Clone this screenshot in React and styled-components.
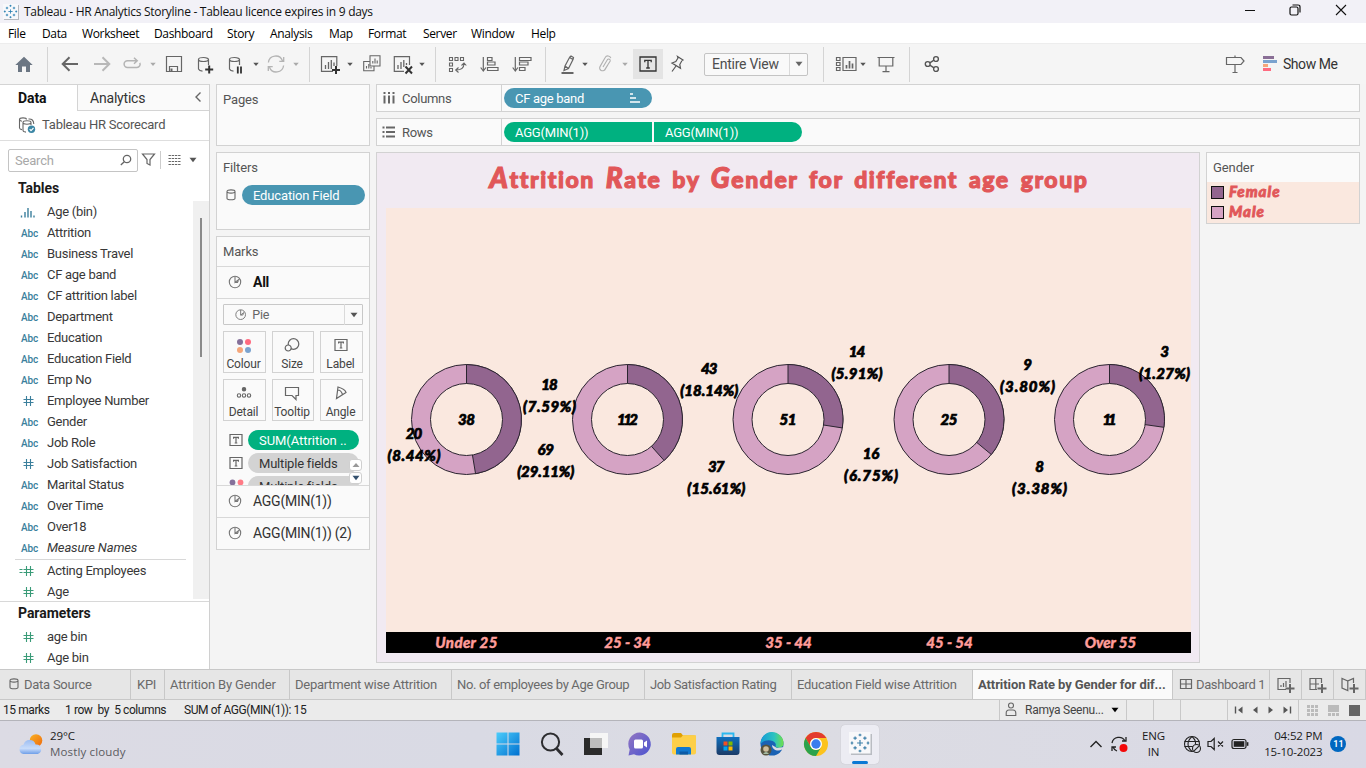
import React from "react";
import styled, { createGlobalStyle, css } from "styled-components";

const ui = `Roboto, "Liberation Sans", sans-serif`;
const sys = `"Open Sans", "Noto Sans", sans-serif`;
const display = `Lato, "Liberation Sans", sans-serif`;
const PEACH = "#fae8df";

const Global = createGlobalStyle`
  * { box-sizing: border-box; }
  body { margin: 0; background: #f4f4f4; overflow: hidden; }
  svg { display: block; overflow: visible; flex: none; }
`;

const Window = styled.div`
  width: 1366px; height: 768px; display: flex; flex-direction: column;
  font: 13px ${ui}; color: #333; background: #f4f4f4; white-space: nowrap; overflow: hidden;
`;

/* ---------- generic ---------- */
const Glyph = ({ w = 20, h = 20, c = "#666", s = 1.2, fill = "none", children, className }) => (
  <svg className={className} width={w} height={h} viewBox={`${-w / 2} ${-h / 2} ${w} ${h}`} fill={fill} stroke={c} strokeWidth={s}>
    {children}
  </svg>
);
const Caret = ({ c = "#555" }) => (
  <svg width="8" height="20" viewBox="-4 -10 8 20"><path d="M-2.7 -1.3H2.7L0 2Z" fill={c} /></svg>
);
const Down = ({ c = "#555" }) => (
  <svg width="8" height="6" viewBox="0 0 8 6"><path d="M.5 .8h7L4 5.2z" fill={c} /></svg>
);

/* ---------- title + menu ---------- */
const TitleBar = styled.div`
  height: 23px; flex: none; display: flex; align-items: center; background: #f2f1f7;
  font: 12px ${sys}; letter-spacing: -0.28px; color: #111; padding-left: 3px;
`;
const TitleText = styled.span`margin-left: 5px; flex: 1;`;
const WinButtons = styled.div`
  display: flex; gap: 25px; margin-right: 15px; margin-top: -3px;
`;
const MenuBar = styled.div`
  height: 20px; flex: none; background: #fff; display: flex; align-items: center; padding: 2px 0 0 8px;
  font: 12px/20px ${sys}; color: #000;
`;
const MenuItem = styled.span`width: ${p => p.$w}px; letter-spacing: -0.35px;`;
const menu = [["File", 34], ["Data", 40], ["Worksheet", 72], ["Dashboard", 73], ["Story", 43], ["Analysis", 59], ["Map", 39], ["Format", 55], ["Server", 48], ["Window", 60], ["Help", 40]];

/* ---------- toolbar ---------- */
const Toolbar = styled.div`
  height: 41px; flex: none; display: flex; align-items: center; background: #f5f5f5; border-top: 1px solid #ededed;
  > * { flex: none; }
`;
const Tool = styled.span`display: flex; align-items: center; margin-left: ${p => p.$gap}px;`;
const Divider = styled.span`width: 1px; height: 35px; background: #d4d4d4; margin-left: ${p => p.$gap}px; margin-top: 1px;`;
const ActiveTool = styled.span`
  width: 30px; height: 30px; margin-left: 4px; background: #e4e4e4; display: flex; align-items: center; justify-content: center;
`;
const FitSelect = styled.div`
  width: 104px; height: 23px; margin-left: 17px; border: 1px solid #c4c4c4; border-radius: 2px; background: #f9f9f9;
  display: flex; align-items: center; font-size: 14px; color: #4e4e4e; padding-left: 7px; letter-spacing: -0.25px;
`;
const SelectArrow = styled.span`
  margin-left: auto; width: 18px; height: 21px; border-left: 1px solid #dadada; display: flex; align-items: center; justify-content: center;
`;
const ShowMe = styled.span`
  display: flex; align-items: center; gap: 6px; margin-left: 18px; font-size: 14px; color: #333; letter-spacing: -0.45px;
`;

const Cylinder = () => <path d="M-7.5 -4.5a5 2 0 0 1 10 0a5 2 0 0 1 -10 0V5q.8 2 4 2.2M2.5 -4.5V1" />;
const SortBars = ({ desc }) => (
  <>
    <path d="M-6.7 -7V6" />
    <path d="M-9.3 3.5L-6.7 7L-4.1 3.5" />
    {desc
      ? <path d="M-2.5 -6.5H9V-3.5H-2.5ZM-2.5 -2H6V1H-2.5ZM-2.5 3.5H3V6.5H-2.5Z" />
      : <path d="M-2.5 -6.5H2V-3.5H-2.5ZM-2.5 -2H5V1H-2.5ZM-2.5 3.5H8V6.5H-2.5Z" />}
  </>
);

function TopToolbar() {
  return (
    <Toolbar>
      <Tool $gap={14}><Glyph c="none" fill="#6b7683"><path d="M0 -7.2L8.7 1H6V8H2V2.5H-2V8H-6V1H-8.7Z" /></Glyph></Tool>
      <Divider $gap={13} />
      <Tool $gap={12}><Glyph s={2}><path d="M8 0H-7M-.5 -6.8L-7.3 0L-.5 6.8" /></Glyph></Tool>
      <Tool $gap={12}><Glyph s={2} c="#b8b8b8"><path d="M-8 0H7M.5 -6.8L7.3 0L.5 6.8" /></Glyph></Tool>
      <Tool $gap={10}><Glyph s={1.5} c="#b4b4b4"><path d="M5 -3.3H-4.5a3.4 3.4 0 0 0 0 6.8H5a3.2 3.2 0 0 0 2.8-4.6M2 -6.3L5.2 -3.3L2 -.3" /></Glyph></Tool>
      <Tool $gap={7}><Caret c="#aaa" /></Tool>
      <Tool $gap={7}><Glyph><path d="M-7.5 -7.5H7.5V7.5H-7.5ZM-4.5 7.5V2.5H3.5V7.5" /><path d="M-2.5 4.5V7" strokeWidth="2" /></Glyph></Tool>
      <Tool $gap={12}><Glyph><Cylinder /><path d="M3.2 1.5V9.5M-.8 5.5H7.2" stroke="#333" strokeWidth="2" /></Glyph></Tool>
      <Tool $gap={11}><Glyph><Cylinder /><path d="M.8 2.5V9.5M4 2.5V9.5" stroke="#333" strokeWidth="1.8" /></Glyph></Tool>
      <Tool $gap={5}><Caret /></Tool>
      <Tool $gap={6}><Glyph c="#b4b4b4" s={1.3}><path d="M-7.6 -1.5A7.3 7.3 0 0 1 6.5 -3.2M7.6 1.5A7.3 7.3 0 0 1 -6.5 3.2M7.7 -7V-2.6H3.3M-7.7 7V2.6H-3.3" /></Glyph></Tool>
      <Tool $gap={6}><Caret c="#aaa" /></Tool>
      <Divider $gap={9} />
      <Tool $gap={10}><Glyph><path d="M3 7.3H-8.5V-7.3H6.8V2" /><path d="M-4.5 5V1M-1.5 5V-2M1.3 5V-4M4 2V-1.5" strokeWidth="1.3" /><path d="M6 2V10M2 6H10" stroke="#333" strokeWidth="2" /></Glyph></Tool>
      <Tool $gap={6}><Caret /></Tool>
      <Tool $gap={8}><Glyph s={1.1}><path d="M-2 -8.3H8V2H-2ZM-2 -2.5H-8.3V6.8H2V2" /><path d="M.8 -.5V-3M3 -.5V-5.5M5.2 -.5V-3.5M-5.5 4.5V2M-3.2 4.5V0M-1 4.5V3" /></Glyph></Tool>
      <Tool $gap={11}><Glyph><path d="M1 7.3H-8.7V-7.3H6.5V1" /><path d="M-5 5V1M-2 5V-2M.8 3V-4M3.5 1V-1" strokeWidth="1.3" /><path d="M2.5 2.5L9 9.5M9 2.5L2.5 9.5" stroke="#333" strokeWidth="2" /></Glyph></Tool>
      <Tool $gap={5}><Caret /></Tool>
      <Divider $gap={9} />
      <Tool $gap={11}><Glyph s={1.1}><path d="M-7.5 -6.5h3v3h-3zM-2 -6.5h3v3h-3zM3.5 -6.5h3v3h-3zM-7.5 -1h3v3h-3zM-7.5 4.5h3v3h-3zM7 -.5Q7 6 -1 6M1.5 3.5L-1.3 6L1.5 8.5M4.5 1.5L7 -1L9.3 1.5" /></Glyph></Tool>
      <Tool $gap={13}><Glyph s={1.2}><SortBars /></Glyph></Tool>
      <Tool $gap={12}><Glyph s={1.2}><SortBars desc /></Glyph></Tool>
      <Divider $gap={13} />
      <Tool $gap={12}><Glyph><path d="M1.5 -6.5L3 -8L5.5 -6.5L5 -4.5L.5 4.5L-4 6.5L-3 2L1.5 -6.5L5 -4.5M-3 2L.5 4.5" /><path d="M-6.5 9H5.5" strokeWidth="2" /></Glyph></Tool>
      <Tool $gap={3}><Caret /></Tool>
      <Tool $gap={6}><Glyph c="#b0b0b0" s={1.1}><path d="M-2 3L2.5 -4.5a1.6 1.6 0 0 1 2.7 1.5L0 5.3a2.8 2.8 0 0 1 -5 -2.7L.2 -6.4a3 3 0 0 1 5.6 .6M2.8 1L-.5 6.5" /></Glyph></Tool>
      <Tool $gap={6}><Caret c="#aaa" /></Tool>
      <ActiveTool><Glyph c="#333" s={1.3}><path d="M-8 -7H8V7H-8ZM-3.2 -1.7V-3.6H3.2V-1.7M0 -3.6V4M-1.8 4H1.8" /></Glyph></ActiveTool>
      <Tool $gap={4}><Glyph c="#555"><path d="M.5 -7.5L6 -4L4.8 -3.2L2.8 .5L3.5 4.3L-5 -1L-1.2 -2.5L1 -6ZM-1 2L-5 7.5" /></Glyph></Tool>
      <FitSelect>Entire View<SelectArrow><Down c="#666" /></SelectArrow></FitSelect>
      <Divider $gap={15} />
      <Tool $gap={12}><Glyph s={1.2}><path d="M-3 -6.5H10V6.5H-3ZM-9.5 -6.5h3.5v3h-3.5zM-9.5 -1.5h3.5v3h-3.5zM-9.5 3.5h3.5v3h-3.5z" /><path d="M.5 4.5V1M3.5 4.5V-3M6.5 4.5V-.5" strokeWidth="1.7" /></Glyph></Tool>
      <Tool $gap={3}><Caret /></Tool>
      <Tool $gap={9}><Glyph s={1.2}><path d="M-8.5 -6.5H8.5M-6.8 -6.5V2H6.8V-6.5M0 2V7.5M-3.5 7.7H3.5" /></Glyph></Tool>
      <Divider $gap={13} />
      <Tool $gap={12}><Glyph c="#555" s={1.4}><circle cx="-4.3" cy="0" r="2.4" /><circle cx="4" cy="-5" r="2.4" /><circle cx="4" cy="5" r="2.4" /><path d="M-2.2 -1.2L2 -3.8M-2.2 1.2L2 3.8" /></Glyph></Tool>
      <Tool $gap={283}><Glyph s={1.2}><path d="M-8.5 -6.5H6L9 -3L6 .5H-8.5ZM0 -8.5V-6.5M0 .5V8.5M-2.5 8.5H2.5" /></Glyph></Tool>
      <ShowMe>
        <svg width="14" height="16" viewBox="0 0 14 16"><path d="M0 0h11v3H0z" fill="#8a6f96" /><path d="M0 4h14v3H0z" fill="#7ba3cf" /><path d="M0 8h5v3H0z" fill="#f5a67a" /><path d="M0 12h8v3H0z" fill="#ff6b80" /></svg>
        Show Me
      </ShowMe>
    </Toolbar>
  );
}

/* ---------- data pane ---------- */
const Main = styled.div`height: 585px; flex: none; display: flex;`;
const DataPane = styled.div`
  width: 210px; flex: none; background: #fff; border-right: 1px solid #d0d0d0; border-top: 1px solid #d4d4d4; display: flex; flex-direction: column;
`;
const PaneTabs = styled.div`height: 27px; flex: none; display: flex;`;
const PaneTab = styled.div`
  display: flex; align-items: center; height: 26px; font-size: 14px;
  ${p => p.$active
    ? css`width: 77px; padding-left: 18px; font-weight: 700; letter-spacing: -0.1px; color: #111;`
    : css`flex: 1; padding: 0 7px 0 12px; border: solid #d4d4d4; border-width: 0 0 1px 1px; background: #fafafa; color: #333; justify-content: space-between; letter-spacing: -0.2px;`}
`;
const Source = styled.div`
  height: 29px; flex: none; border-bottom: 1px solid #dedede; display: flex; align-items: center; gap: 6px; padding: 0 0 3px 19px; color: #555; letter-spacing: -0.24px;
`;
const SearchRow = styled.div`height: 38px; flex: none; display: flex; align-items: center; padding-left: 8px;`;
const SearchBox = styled.div`
  width: 130px; height: 23px; border: 1px solid #c4c4c4; border-radius: 2px; display: flex; align-items: center; justify-content: space-between;
  padding: 0 3px 0 6px; color: #a8a8a8; margin-right: 2px; letter-spacing: -0.2px;
`;
const SearchTools = styled.div`display: flex; align-items: center; gap: 3px;`;
const PaneHeading = styled.div`
  height: ${p => p.$h}px; flex: none; display: flex; align-items: center; padding: 0 0 ${p => p.$lift || 0}px 18px; font-size: 14px; font-weight: 700; color: #1a1a1a; letter-spacing: -0.05px;
`;
const ListArea = styled.div`height: 401px; flex: none; display: flex; border-bottom: 1px solid #d8d8d8;`;
const FieldList = styled.div`flex: 1;`;
const FieldRow = styled.div`
  height: 21px; display: flex; align-items: center; color: #383838; letter-spacing: ${p => (p.$italic ? -0.15 : -0.28)}px;
  font-style: ${p => (p.$italic ? "italic" : "normal")};
`;
const FieldIcon = styled.span`
  width: 29px; margin: 1px 8px 0 9px; padding-left: 12px; color: ${p => (p.$green ? "#3a9b78" : "#3b7f9c")};
  font: 500 10px ${ui}; letter-spacing: -0.15px; display: flex; box-sizing: content-box; width: 18px;
`;
const ListRule = styled.div`height: 1px; margin: 1px 7px 0 15px; background: #d8d8d8;`;
const Gutter = styled.div`width: 16px; background: #f0f0f0; padding: 17px 0 0 7px; height: 398px;`;
const Thumb = styled.div`width: 2px; height: 139px; background: #8a8a8a;`;

const Hash = ({ calc }) => (
  <svg width="17" height="12" viewBox="1 0 17 12" fill="none" stroke="currentColor" strokeWidth="1.1">
    <path d="M6.5 1V11M10.5 1V11M3.5 4.5H13.5M3.5 7.5H13.5" />
    {calc && <path d="M-.5 4.5H2.5M-.5 7.5H2.5" />}
  </svg>
);
const BinIcon = () => (
  <svg width="14" height="11" viewBox="0 0 14 11" fill="none" stroke="currentColor" strokeWidth="1.4"><path d="M.5 10.5V8.5M4 10.5V5M7 10.5V1M10 10.5V4M13 10.5V8.5" /></svg>
);
const fields = [["bin", "Age (bin)"], ["Abc", "Attrition"], ["Abc", "Business Travel"], ["Abc", "CF age band"], ["Abc", "CF attrition label"], ["Abc", "Department"], ["Abc", "Education"], ["Abc", "Education Field"], ["Abc", "Emp No"], ["#", "Employee Number"], ["Abc", "Gender"], ["Abc", "Job Role"], ["#", "Job Satisfaction"], ["Abc", "Marital Status"], ["Abc", "Over Time"], ["Abc", "Over18"], ["Abc", "Measure Names"]];

const Field = ({ type, name, green }) => (
  <FieldRow $italic={name === "Measure Names"}>
    <FieldIcon $green={green}>
      {type === "Abc" ? "Abc" : type === "bin" ? <BinIcon /> : <Hash calc={type === "=#"} />}
    </FieldIcon>
    {name}
  </FieldRow>
);

function LeftPane() {
  return (
    <DataPane>
      <PaneTabs>
        <PaneTab $active>Data</PaneTab>
        <PaneTab>Analytics<Glyph w={8} h={10} s={1.4}><path d="M2.5 -5.5L-2 -1L2.5 3.5" /></Glyph></PaneTab>
      </PaneTabs>
      <Source>
        <Glyph w={17} h={18} s={1.1}>
          <path d="M-1 -5.5a3.5 1.6 0 0 0 -7 0V3q.3 1.4 2.5 1.6M-8 -5.5q.3 1.5 2.5 1.7M-4.5 -2.5a4 1.7 0 0 1 8 0a4 1.7 0 0 1 -8 0V5.5q.2 1.4 3 1.6M3.5 -2.5V0M1 -6Q6 -6.5 6.3 -1" />
          <circle cx="4" cy="4.2" r="3.7" fill="#3b86a5" stroke="none" /><path d="M2.2 4.2L3.5 5.6L6 3" stroke="#fff" />
        </Glyph>
        Tableau HR Scorecard
      </Source>
      <SearchRow>
        <SearchBox>Search<Glyph w={16} h={14} s={1.3}><circle cx="1" cy="-1" r="3.7" /><path d="M-1.7 1.7L-5.2 5" /></Glyph></SearchBox>
        <SearchTools>
          <Glyph w={17} h={18} s={1.2}><path d="M-6 -6H6L1.5 -.5V5L-1.5 3.5V-.5Z" /></Glyph>
          <svg width="1" height="18"><path d="M.5 0V18" stroke="#ccc" /></svg>
          <Glyph w={22} h={14} s={1.1}><path strokeDasharray="2.4 .8" d="M-6.5 -4.5H6M-6.5 -1.5H6M-6.5 1.5H6M-6.5 4.5H6" /></Glyph>
          <Down />
        </SearchTools>
      </SearchRow>
      <PaneHeading $h={22} $lift={4}>Tables</PaneHeading>
      <ListArea>
        <FieldList>
          {fields.map(([t, n]) => <Field key={n} type={t} name={n} />)}
          <ListRule />
          <Field type="=#" name="Acting Employees" green />
          <Field type="#" name="Age" green />
        </FieldList>
        <Gutter><Thumb /></Gutter>
      </ListArea>
      <PaneHeading $h={24} $lift={2}>Parameters</PaneHeading>
      <Field type="#" name="age bin" green />
      <Field type="#" name="Age bin" green />
    </DataPane>
  );
}

/* ---------- cards ---------- */
const Cards = styled.div`width: 154px; margin-left: 6px; flex: none; display: flex; flex-direction: column; gap: 6px;`;
const Card = styled.div`height: ${p => p.$h}px; background: #fafafa; border: 1px solid #d2d2d2; color: #555;`;
const CardTitle = styled.div`height: 29px; padding-left: 6px; line-height: 30px; letter-spacing: -0.15px;`;
const FilterRow = styled.div`display: flex; align-items: center; gap: 3px; padding: 3px 4px 0 6px;`;
const Pill = styled.div`
  height: 20px; flex: none; width: ${p => p.$w}px; background: ${p => p.$bg}; color: ${p => p.$fg || "#fff"};
  border-radius: ${p => p.$radius || "10px"}; padding: 0 10px 0 11px; display: flex; align-items: center; justify-content: space-between; letter-spacing: ${p => p.$ls ?? -0.15}px;
`;
const MarkRow = styled.div`
  height: 32px; border-top: 1px solid #d8d8d8; display: flex; align-items: center; padding: 0 0 2px 9px; gap: 9px; font-size: 14px; color: #333; letter-spacing: -0.25px;
  ${p => p.$bold && css`font-weight: 700; color: #111;`}
`;
const MarksBody = styled.div`border-top: 1px solid #d8d8d8; height: 187px; padding: 5px 6px 0; position: relative; overflow: hidden;`;
const MarkSelect = styled.div`
  height: 21px; border: 1px solid #c8c8c8; border-radius: 1px; display: flex; align-items: center; gap: 4px; padding-left: 9px; font-size: 12.5px; color: #666; letter-spacing: -0.2px;
`;
const MarkGrid = styled.div`display: grid; grid-template-columns: 43px 42px 43px; gap: 6px; margin: 6px 0 9px;`;
const MarkButton = styled.div`
  height: 42px; border: 1px solid #d2d2d2; display: flex; flex-direction: column; align-items: center; justify-content: flex-end; gap: 3px; padding: 0 2px 1px 0; font-size: 12px; color: #444; letter-spacing: -0.15px;
`;
const MarkPill = styled.div`display: flex; align-items: center; gap: 5px; padding-left: 6px; margin-bottom: 3px;`;
const Scroller = styled.div`position: absolute; right: 7px; top: 160px; display: flex; flex-direction: column; gap: 1px;`;
const ScrollButton = styled.div`width: 13px; height: 12px; background: #fff; border: 1px solid #d0d0d0; border-radius: 3px; display: flex; align-items: center; justify-content: center;`;

const PieGlyph = ({ size = 1, c = "#777" }) => (
  <Glyph w={18 * size} h={18 * size} c={c} s={1.1}>
    <g transform={`scale(${size})`}><circle r="5.7" /><path d="M0 -5.5V.5L4.5 -3M0 .5H2.5Q3.5 -1 3 -2" /></g>
  </Glyph>
);
const TBox = () => <Glyph w={14} h={14} s={1.2}><path d="M-6 -5.5H6V5.5H-6ZM-2.4 -1.3V-2.6H2.4V-1.3M0 -2.6V3M-1.3 3H1.3" /></Glyph>;
const Dots = () => (
  <Glyph w={16} h={16} c="none"><circle cx="-4" cy="-4" r="3" fill="#85709a" /><circle cx="4" cy="-4" r="3" fill="#ff6b80" /><circle cx="-4" cy="4" r="3" fill="#f5a67a" /><circle cx="4" cy="4" r="3" fill="#7ba3cf" /></Glyph>
);
const markButtons = [
  ["Colour", <Dots />],
  ["Size", <Glyph w={16} h={18}><circle cx="1.5" cy="-1" r="5.3" /><circle cx="-3.8" cy="3" r="3" fill="#fafafa" /></Glyph>],
  ["Label", <Glyph w={16} h={18}><path d="M-6 -5.5H6V5.5H-6ZM-2.4 -1.6V-2.8H2.4V-1.6M0 -2.8V3M-1.3 3H1.3" /></Glyph>],
  ["Detail", <Glyph w={16} h={18} s={1.1}><circle cy="-3.8" r="1.7" fill="#666" /><circle cx="-5" cy="2.5" r="1.7" /><circle cy="2.5" r="1.7" /><circle cx="5" cy="2.5" r="1.7" /></Glyph>],
  ["Tooltip", <Glyph w={16} h={18}><path d="M-6.5 -5.5H6.5V2.5H4V6.5L0 2.5H-6.5Z" /></Glyph>],
  ["Angle", <Glyph w={16} h={18}><path d="M-4.5 5.5L-3 -6Q4 -4 5 -.5ZM-3 -3Q0 -3 1.5 1.5" /></Glyph>],
];

function CardColumn() {
  return (
    <Cards>
      <Card $h={62}><CardTitle>Pages</CardTitle></Card>
      <Card $h={78}>
        <CardTitle>Filters</CardTitle>
        <FilterRow>
          <Glyph w={16} h={16} s={1.1}><path d="M-4 -3.5a4 1.6 0 0 1 8 0a4 1.6 0 0 1 -8 0V3.2a4 1.6 0 0 0 8 0V-3.5" /></Glyph>
          <Pill $w={123} $bg="#4996b2">Education Field</Pill>
        </FilterRow>
      </Card>
      <Card $h={314}>
        <CardTitle>Marks</CardTitle>
        <MarkRow $bold><PieGlyph />All</MarkRow>
        <MarksBody>
          <MarkSelect><PieGlyph size={0.85} />Pie<SelectArrow><Down /></SelectArrow></MarkSelect>
          <MarkGrid>{markButtons.map(([n, icon]) => <MarkButton key={n}>{icon}{n}</MarkButton>)}</MarkGrid>
          <MarkPill><TBox /><Pill $w={111} $bg="#00b180" $ls={-0.05}>SUM(Attrition ..</Pill></MarkPill>
          <MarkPill><TBox /><Pill $w={111} $bg="#d3d3d3" $fg="#333" $ls={-0.2}>Multiple fields</Pill></MarkPill>
          <MarkPill><Glyph w={14} h={14} c="none"><circle cx="-3.5" cy="-3.5" r="2.9" fill="#85709a" /><circle cx="4.5" cy="-3.5" r="2.9" fill="#ff7b86" /></Glyph><Pill $w={111} $bg="#d3d3d3" $fg="#333" $ls={-0.2}>Multiple fields</Pill></MarkPill>
          <Scroller>
            <ScrollButton><svg width="8" height="6" viewBox="0 0 8 6"><path d="M.5 5h7L4 1z" fill="#999" /></svg></ScrollButton>
            <ScrollButton><Down c="#34506e" /></ScrollButton>
          </Scroller>
        </MarksBody>
        <MarkRow><PieGlyph />AGG(MIN(1))</MarkRow>
        <MarkRow><PieGlyph />AGG(MIN(1)) (2)</MarkRow>
      </Card>
    </Cards>
  );
}

/* ---------- shelves & view ---------- */
const Work = styled.div`width: 984px; margin-left: 6px; flex: none; display: flex; flex-direction: column; gap: 6px;`;
const Shelf = styled.div`height: 28px; flex: none; background: #fafafa; border: 1px solid #d2d2d2; display: flex; align-items: center; color: #555;`;
const ShelfLabel = styled.div`
  width: 125px; height: 26px; border-right: 1px solid #d2d2d2; display: flex; align-items: center; gap: 6px; padding-left: 5px; letter-spacing: -0.3px; margin-right: 2px;
`;
const PillRow = styled.div`display: flex; gap: 2px;`;
const ViewRow = styled.div`display: flex; gap: 6px;`;
const View = styled.div`width: 824px; height: 511px; background: #f1eaf2; border: 1px solid #d2d2d2; padding: 0 8px 0 9px;`;
const VizTitle = styled.div`
  height: 55px; display: flex; align-items: center; justify-content: center; font: 900 23px ${display}; color: #e15759; letter-spacing: 1.53px; word-spacing: 4px; padding: 0 0 7px 1px;
  -webkit-text-stroke: 1.1px #e15759;
`;
const Cap = styled.span`font-style: italic; font-size: 28px;`;
const Chart = styled.div`height: 424px; background: ${PEACH};`;
const Bands = styled.div`height: 21px; background: #000; display: grid; grid-template-columns: repeat(5, 1fr); width: 805px;`;
const Band = styled.div`text-align: center; font: italic 900 15px/21px ${display}; color: #ff9d9a; -webkit-text-stroke: 0.4px #ff9d9a; letter-spacing: ${p => (p.$wide ? 0.35 : 0)}px;`;
const Legend = styled.div`width: 154px; height: 72px; background: #fafafa; border: 1px solid #d2d2d2; color: #555;`;
const LegendTitle = styled.div`height: 29px; padding-left: 6px; line-height: 30px; letter-spacing: -0.1px;`;
const LegendItems = styled.div`height: 41px; background: ${PEACH};`;
const LegendItem = styled.div`
  height: 20px; display: flex; align-items: center; gap: 5px; padding-left: 4px; font: italic 900 15px/18px ${display}; color: #e15759; letter-spacing: 1px;
  -webkit-text-stroke: 0.8px #e15759;
`;
const LegendText = styled.span`padding-bottom: 2px;`;
const Swatch = styled.span`width: 13px; height: 13px; background: ${p => p.$c}; border: 1px solid #111;`;

const MALE = "#d5a3c4";
const FEMALE = "#92658f";
const donuts = [[80.5, 18, 38], [241.5, 43, 112], [402, 14, 51], [563, 9, 25], [723.5, 3, 11]];
const labels = [
  [163.5, 176, "18", "(7.59%)", 53], [28, 225, "20", "(8.44%)", 53], [323.3, 160, "43", "(18.14%)", 58], [159.7, 241, "69", "(29.11%)", 57],
  [330.3, 258, "37", "(15.61%)", 58], [471, 143, "14", "(5.91%)", 51], [485, 245, "16", "(6.75%)", 54], [641.5, 156, "9", "(3.80%)", 55],
  [653.5, 258, "8", "(3.38%)", 55], [778.5, 143, "3", "(1.27%)", 51],
];
const VizSvg = styled.svg`
  font: italic 900 15px ${display};
  text { fill: #000; stroke: #000; stroke-width: 0.7px; text-anchor: middle; }
`;
const CY = 211.5, R = 55, r = 36;

function Donut({ x, part, total }) {
  const a = (part / total) * Math.PI * 2;
  const p = (rad, ang) => `${x + rad * Math.sin(ang)} ${CY - rad * Math.cos(ang)}`;
  return (
    <g stroke="#2b2530" strokeWidth="1">
      <circle cx={x} cy={CY} r={R} fill={MALE} />
      <path d={`M${x} ${CY}L${p(R, 0)}A${R} ${R} 0 0 1 ${p(R, a)}Z`} fill={FEMALE} />
      <circle cx={x} cy={CY} r={r} fill={PEACH} />
      <text x={x} y={CY + 5.5} textLength={total > 99 ? 21 : total === 11 ? 14 : 17}>{total}</text>
    </g>
  );
}

function Viz() {
  return (
    <View>
      <VizTitle><span><Cap>A</Cap>ttrition <Cap>R</Cap>ate by <Cap>G</Cap>ender for different age group</span></VizTitle>
      <Chart>
        <VizSvg width="805" height="424">
          {donuts.map(([x, f, t]) => <Donut key={x} x={x} part={f} total={t} />)}
          {labels.map(([x, y, n, pct, w]) => (
            <g key={pct}>
              <text x={x} y={y + 5.5} textLength={n.length * 8.2}>{n}</text>
              <text x={x} y={y + 27.5} textLength={w}>{pct}</text>
            </g>
          ))}
        </VizSvg>
      </Chart>
      <Bands>{["Under 25", "25 - 34", "35 - 44", "45 - 54", "Over 55"].map((b, i) => <Band key={b} $wide={i === 0}>{b}</Band>)}</Bands>
    </View>
  );
}

function Workspace() {
  return (
    <Work>
      <Shelf>
        <ShelfLabel><Glyph w={14} h={14} s={2}><path d="M-4.5 -2.5V5.5M0 -2.5V5.5M4.5 -2.5V5.5M-4.5 -6V-4M0 -6V-4M4.5 -6V-4" /></Glyph>Columns</ShelfLabel>
        <Pill $w={148} $bg="#4996b2" $ls={-0.3}>CF age band<Glyph w={14} h={12} c="#fff" s={1.6}><path d="M-5 -4H-2M-5 0H1M-5 4H5" /></Glyph></Pill>
      </Shelf>
      <Shelf>
        <ShelfLabel><Glyph w={14} h={14} s={2}><path d="M-3 -4.5H6M-3 0H6M-3 4.5H6M-6.5 -4.5H-4.5M-6.5 0H-4.5M-6.5 4.5H-4.5" /></Glyph>Rows</ShelfLabel>
        <PillRow>
          <Pill $w={148} $bg="#00b180" $radius="10px 0 0 10px" $ls={-0.2}>AGG(MIN(1))</Pill>
          <Pill $w={148} $bg="#00b180" $radius="0 10px 10px 0" $ls={-0.2}>AGG(MIN(1))</Pill>
        </PillRow>
      </Shelf>
      <ViewRow>
        <Viz />
        <Legend>
          <LegendTitle>Gender</LegendTitle>
          <LegendItems>
            <LegendItem><Swatch $c={FEMALE} /><LegendText>Female</LegendText></LegendItem>
            <LegendItem><Swatch $c={MALE} /><LegendText>Male</LegendText></LegendItem>
          </LegendItems>
        </Legend>
      </ViewRow>
    </Work>
  );
}

/* ---------- sheet tabs & status ---------- */
const SheetTabs = styled.div`height: 31px; flex: none; display: flex; background: #e6e6e6; border: solid #c8c8c8; border-width: 1px 0;`;
const SheetTab = styled.div`
  width: ${p => p.$w}px; flex: none; border-right: 1px solid #c8c8c8; display: flex; align-items: center; gap: ${p => p.$gap || 5}px; padding-left: ${p => (p.$pad ?? 5)}px; color: #6a6a6a; letter-spacing: ${p => p.$ls ?? -0.28}px;
  ${p => p.$active && css`background: #fafafa; color: #555; font-weight: 700; padding-bottom: 1px;`}
`;
const StatusBar = styled.div`height: 21px; flex: none; display: flex; background: #ebebeb; border-bottom: 1px solid #b4b4ba; font-size: 12px; color: #222;`;
const StatusText = styled.div`width: ${p => p.$w}px; padding-left: ${p => p.$pad}px; line-height: 20px; white-space: pre; letter-spacing: -0.42px;`;
const StatusCell = styled.div`
  width: ${p => p.$w}px; border-left: 1px solid #c8c8c8; display: flex; align-items: center; gap: ${p => p.$gap || 0}px; padding-left: ${p => p.$pad || 0}px; color: #444; letter-spacing: -0.25px;
`;
const CylSmall = () => <Glyph w={12} h={14} s={1.1}><path d="M-4 -4.5a4 1.6 0 0 1 8 0a4 1.6 0 0 1 -8 0V2.2a4 1.6 0 0 0 8 0V-4.5" /></Glyph>;
const Plus = () => <path d="M5 0V9M.5 4.5H9.5" strokeWidth="2" />;

function SheetBar() {
  return (
    <>
      <SheetTabs>
        <SheetTab $w={131} $pad={8} $gap={4} $ls={-0.25}><CylSmall />Data Source</SheetTab>
        <SheetTab $w={34} $pad={6}>KPI</SheetTab>
        <SheetTab $w={125} $ls={-0.16}>Attrition By Gender</SheetTab>
        <SheetTab $w={162} $ls={-0.24}>Department wise Attrition</SheetTab>
        <SheetTab $w={193} $ls={-0.33}>No. of employees by Age Group</SheetTab>
        <SheetTab $w={147} $ls={-0.36}>Job Satisfaction Rating</SheetTab>
        <SheetTab $w={181}>Education Field wise Attrition</SheetTab>
        <SheetTab $w={200} $ls={-0.08} $active>Attrition Rate by Gender for dif...</SheetTab>
        <SheetTab $w={97} $pad={6} $gap={3} $ls={-0.38}><Glyph w={14} h={14}><path d="M-5.5 -5.5H5.5V3.5H-5.5ZM0 -5.5V3.5M-5.5 -1H5.5" /></Glyph>Dashboard 1</SheetTab>
        <SheetTab $w={32}><Glyph><path d="M1 4.500H-7V-6.500H5V-2" /><path d="M-4 2V0M-1.500 2V-2M1 2V-4" /><path d="M5 -1V8M.5 3.500H9.500" strokeWidth="2" /></Glyph></SheetTab>
        <SheetTab $w={32}><Glyph><g transform="translate(0 -1)"><path d="M0 5.5H-7V-5.5H4.5V-1M-1.2 -5.5V5.5M-7 0H2" /><Plus /></g></Glyph></SheetTab>
        <SheetTab $w={32}><Glyph><g transform="translate(0 -1)"><path d="M-1.2 -3L-7 -5.5V4L-1.2 6.5V-3L4.5 -5.5V-1" /><Plus /></g></Glyph></SheetTab>
      </SheetTabs>
      <StatusBar>
        <StatusText $w={61} $pad={3}>15 marks</StatusText>
        <StatusText $w={119} $pad={4}>1 row  by  5 columns</StatusText>
        <StatusText $w={819} $pad={4}>SUM of AGG(MIN(1)): 15</StatusText>
        <StatusCell $w={127} $pad={4} $gap={7}>
          <Glyph w={14} h={16} s={1.1}><circle cx="0" cy="-4.5" r="2.5" /><path d="M-4.8 5.5V3Q-4.8 0 -2 0H2Q4.8 0 4.8 3V5.5Z" /></Glyph>
          Ramya Seenu...<Down c="#000" />
        </StatusCell>
        <StatusCell $w={27} /><StatusCell $w={27} /><StatusCell $w={47} />
        <StatusCell $w={71} $pad={5} $gap={4}>
          {[["M3.5 -3.5L-1 0L3.5 3.5Z", "M-3.5 -3.5V3.5"], ["M2.5 -3.5L-2 0L2.5 3.5Z"], ["M-2.5 -3.5L2 0L-2.5 3.5Z"], ["M-3.5 -3.5L1 0L-3.5 3.5Z", "M3.5 -3.5V3.5"]].map(([a, b], i) => (
            <Glyph key={i} w={12} h={12} c="none" fill="#555"><path d={a} />{b && <path d={b} stroke="#555" strokeWidth="1.4" />}</Glyph>
          ))}
        </StatusCell>
        <StatusCell $w={68} $pad={8} $gap={10}>
          <Glyph w={11} h={11} c="none" fill="#bbb"><path d="M-5.5-5.5h3v3h-3zM-1.5-5.5h3v3h-3zM2.5-5.5h3v3h-3zM-5.5-1.5h3v3h-3zM-1.5-1.5h3v3h-3zM2.5-1.5h3v3h-3zM-5.5 2.5h3v3h-3zM-1.5 2.5h3v3h-3zM2.5 2.5h3v3h-3z" /></Glyph>
          <Glyph w={11} h={11} c="none" fill="#bbb"><path d="M-5.5-5.5h11v7h-11zM-5.5 2.5h3v3h-3zM-1.5 2.5h3v3h-3zM2.5 2.5h3v3h-3z" /></Glyph>
          <Glyph w={11} h={11} c="none" fill="#666"><path d="M-5.5-5.5h11v11h-11z" /></Glyph>
        </StatusCell>
      </StatusBar>
    </>
  );
}

/* ---------- taskbar ---------- */
const Taskbar = styled.div`
  height: 47px; flex: none; display: flex; align-items: center; background: linear-gradient(90deg, #dcdbe4, #d9dae4 35%, #dcdce3 60%, #d9d9e5); font: 11.5px ${sys}; color: #1b1b1b;
`;
const Weather = styled.div`width: 486px; padding-left: 18px; display: flex; align-items: center; gap: 7px;`;
const Lines = styled.div`line-height: 16px; padding-bottom: 1px; text-align: ${p => p.$align || "left"}; letter-spacing: ${p => p.$ls ?? -0.1}px;`;
const Muted = styled.div`color: #5a5a60; letter-spacing: 0.15px;`;
const Apps = styled.div`display: flex; width: 602px;`;
const AppSlot = styled.div`
  width: 38px; height: 39px; margin: 0 3px; padding-bottom: 2px; border-radius: 4px; display: flex; align-items: center; justify-content: center; position: relative;
  ${p => p.$active && css`background: #ececf3; box-shadow: 0 0 1px #b0b0b8;
    &::after { content: ""; position: absolute; bottom: 0; left: 11px; width: 16px; height: 3px; border-radius: 2px; background: #0a78d4; }`}
`;
const Tray = styled.div`display: flex; align-items: center;`;
const TrayItem = styled.div`margin-left: ${p => p.$gap}px;`;
const Badge = styled.div`width: 16px; height: 16px; border-radius: 8px; background: #0067c0; color: #fff; font: 600 9px/16px ${ui}; text-align: center; margin: -1px 0 0 8px;`;

const TableauMark = ({ scale = 1, c = "#3b7ea8" }) => (
  <g transform={`scale(${scale})`} stroke={c} strokeWidth={1.2} fill="none">
    <path d="M0 -3V3M-3 0H3M-6.8 0H-9.5M-8.2 -1.5V1.5M6.8 0H9.5M8.2 -1.5V1.5M0 -6.8V-9.5M-1.5 -8.2H1.5M0 6.8V9.5M-1.5 8.2H1.5M-5 -6.7V-3.3M-6.7 -5H-3.3M5 -6.7V-3.3M6.7 -5H3.3M-5 6.7V3.3M-6.7 5H-3.3M5 6.7V3.3M6.7 5H3.3" />
  </g>
);

function TaskbarRow() {
  return (
    <Taskbar>
      <Weather>
        <svg width="25" height="24" viewBox="0 0 25 24">
          <defs><linearGradient id="sun" x1="0" y1="0" x2="1" y2="1"><stop offset="0" stopColor="#f9b223" /><stop offset="1" stopColor="#ee6a10" /></linearGradient>
            <linearGradient id="cloud" x1="0" y1="0" x2="0" y2="1"><stop offset="0" stopColor="#9dbef2" /><stop offset=".6" stopColor="#c9dcfa" /><stop offset="1" stopColor="#6f9fe8" /></linearGradient></defs>
          <circle cx="18" cy="7.5" r="6.3" fill="url(#sun)" />
          <path d="M5.5 21a4.7 4.7 0 0 1 0-9.3A6.3 6.3 0 0 1 17.6 11.5a4.9 4.9 0 0 1 2.2 9.5z" fill="url(#cloud)" />
        </svg>
        <Lines>29°C<Muted>Mostly cloudy</Muted></Lines>
      </Weather>
      <Apps>
        <AppSlot><svg width="24" height="24"><defs><linearGradient id="win" x1="0" y1="0" x2="1" y2="1"><stop offset="0" stopColor="#4ccdfb" /><stop offset="1" stopColor="#0070d0" /></linearGradient></defs><path fill="url(#win)" d="M.5 .5h11v11H.5zM12.500 .5h11v11h-11zM.5 12.500h11v11H.5zM12.500 12.500h11v11h-11z" /></svg></AppSlot>
        <AppSlot><Glyph w={24} h={24} c="#2d2d30" s={2}><circle cx="-1.5" cy="-2" r="8.6" /><path d="M4.5 4.5L10.5 11" strokeWidth="2.8" /></Glyph></AppSlot>
        <AppSlot><svg width="24" height="24"><path d="M0 6h18v17H0z" fill="#2b2b2b" /><path d="M6 1h18v15H6z" fill="#f6f6f6" /><path d="M6 6h12v10H6z" fill="#bdbdbd" /></svg></AppSlot>
        <AppSlot><svg width="24" height="24"><defs><linearGradient id="chat" x1="0" y1="0" x2="1" y2="1"><stop offset="0" stopColor="#9477c2" /><stop offset="1" stopColor="#4b53d0" /></linearGradient></defs><path d="M12 .5A11.5 11.5 0 1 1 6 22.2L.5 23.5L1.7 17.5A11.5 11.5 0 0 1 12 .5z" fill="url(#chat)" /><rect x="6" y="7.5" width="9" height="9" rx="1.5" fill="#fff" /><path d="M16 10.5L19 8.5V15.5L16 13.5z" fill="#fff" /></svg></AppSlot>
        <AppSlot><svg width="24" height="24"><path d="M0 3a2 2 0 0 1 2-2h7l2 2.5H22a2 2 0 0 1 2 2V12H0z" fill="#e0a003" /><path d="M0 5.5h9l2-2.2H24V20.5a2 2 0 0 1-2 2H2a2 2 0 0 1-2-2z" fill="#fdcf48" /><path d="M4 22.5V17a2 2 0 0 1 2-2H17a2 2 0 0 1 2 2V22.5z" fill="#1078cf" /><path d="M7.5 22.5V19.5H16V22.5z" fill="#0b5aa6" /></svg></AppSlot>
        <AppSlot><svg width="24" height="24"><defs><linearGradient id="store" x1="0" y1="0" x2="0" y2="1"><stop offset="0" stopColor="#0f6fbe" /><stop offset="1" stopColor="#1b3a66" /></linearGradient></defs><path d="M6.5 6V1.5H17.5V6" fill="none" stroke="#2bb8ef" strokeWidth="1.8" /><path d="M.5 5H23.5V20a3 3 0 0 1-3 3h-17a3 3 0 0 1-3-3z" fill="url(#store)" /><path d="M7.5 9.5h4v4h-4z" fill="#f25022" /><path d="M12.5 9.5h4v4h-4z" fill="#7fba00" /><path d="M7.5 14.5h4v4h-4z" fill="#00a4ef" /><path d="M12.5 14.5h4v4h-4z" fill="#ffb900" /></svg></AppSlot>
        <AppSlot><svg width="24" height="24"><defs><linearGradient id="edge" x1="0" y1="0" x2="1" y2="0"><stop offset="0" stopColor="#159bd7" /><stop offset=".6" stopColor="#2cc3c0" /><stop offset="1" stopColor="#6fe04a" /></linearGradient></defs><circle cx="12" cy="12" r="11.5" fill="#1a62b4" /><path d="M.5 12A11.5 11.5 0 0 1 23.5 11c.3 4-4 5.5-7 4.5-2-1 0-2-1-4C13 7 4 7 .5 12z" fill="url(#edge)" /><path d="M12 13c0 5 6 7 10 4.5L23 19 24 15 17 16z" fill="#dadae4" /><circle cx="6" cy="18" r="5.5" fill="#57543f" /><circle cx="6" cy="17" r="2.8" fill="#cdbd9d" /><path d="M3 22q3-4 6 0z" fill="#a6bba3" /></svg></AppSlot>
        <AppSlot><svg width="24" height="24" viewBox="-12 -12 24 24"><circle r="12" fill="#fcc31e" /><path d="M-10.4 -6A12 12 0 0 1 10.4 -6H0A6 6 0 0 0 -5.2 3Z" fill="#e33b2e" /><path d="M-10.4 -6A12 12 0 0 0 0 12L5.2 3A6 6 0 0 1 -5.2 3Z" fill="#2ba24c" /><circle r="6" fill="#fff" /><circle r="4.7" fill="#3b7ded" /></svg></AppSlot>
        <AppSlot $active><svg width="24" height="24" viewBox="-12 -12 24 24"><rect x="-9" y="-10" width="21" height="21" fill="#b9bcc2" /><rect x="-11" y="-12" width="21.5" height="21.5" fill="#f8f8fa" /><g transform="translate(0 -1)"><TableauMark scale={0.98} /></g></svg></AppSlot>
      </Apps>
      <Tray>
        <Glyph w={16} h={16} c="#222" s={1.4}><path d="M-5.5 2L0 -3.5L5.5 2" /></Glyph>
        <TrayItem $gap={7}><Glyph w={18} h={18} c="#222" s={1.3}><g transform="translate(-1 -1)"><path d="M-7 -1A7 7 0 0 1 6 -3M7 -7V-3H3M-2 7A7 7 0 0 1 -6 3M-7 7V3H-3" /><circle cx="4.5" cy="4" r="4" fill="#f40808" stroke="none" /></g></Glyph></TrayItem>
        <TrayItem $gap={13}><Lines $align="center">ENG<br />IN</Lines></TrayItem>
        <TrayItem $gap={18}><Glyph w={18} h={18} c="#222" s={1.1}><g transform="translate(0 -1)"><circle r="7.5" /><path d="M-7.5 -2.5H7.5M-7.5 2.5H2M0 -7.5Q-8 0 0 7.5M0 -7.5Q4 -4 3.5 0" /><circle cx="4.5" cy="4.5" r="4" fill="#dadae4" /><path d="M1.8 7.2L7.2 1.8" /></g></Glyph></TrayItem>
        <TrayItem $gap={6}><Glyph w={16} h={16} c="#222" s={1.2}><path d="M-7 -3.5H-4L-.8 -6.5V4.5L-4 1.5H-7ZM3 -3.5L8 1.5M8 -3.5L3 1.5" /></Glyph></TrayItem>
        <TrayItem $gap={8}><Glyph w={18} h={12} c="#222" s={1.2}><rect x="-8" y="-5.5" width="14" height="9" rx="2" /><rect x="-6.3" y="-3.8" width="10.6" height="5.6" fill="#222" stroke="none" /><path d="M7.6 -2.8V.8" strokeWidth="1.6" /></Glyph></TrayItem>
        <TrayItem $gap={15}><Lines $align="right" $ls={-0.17}>04:52 PM<br />15-10-2023</Lines></TrayItem>
        <Badge>11</Badge>
      </Tray>
    </Taskbar>
  );
}

export default function App() {
  return (
    <Window>
      <Global />
      <TitleBar>
        <svg width="16" height="16" viewBox="-8 -8 16 16"><rect x="-7" y="-7" width="15" height="15" fill="#b5b8be" /><rect x="-8" y="-8" width="15" height="15" fill="#f8f8fb" /><g transform="translate(-.5 -.5)"><TableauMark scale={0.7} c="#2a7fb0" /></g></svg>
        <TitleText>Tableau - HR Analytics Storyline - Tableau licence expires in 9 days</TitleText>
        <WinButtons>
          <Glyph c="#111" s={1}><path d="M-6 .5H4" /></Glyph>
          <Glyph c="#111" s={1.2}><rect x="-6" y="-3" width="8" height="8" rx="1.5" /><path d="M-3.5 -5H2Q4 -5 4 -3V2.5" /></Glyph>
          <Glyph c="#111" s={1.1}><path d="M-5 -5L5 5M5 -5L-5 5" /></Glyph>
        </WinButtons>
      </TitleBar>
      <MenuBar>{menu.map(([m, w]) => <MenuItem key={m} $w={w}>{m}</MenuItem>)}</MenuBar>
      <TopToolbar />
      <Main><LeftPane /><CardColumn /><Workspace /></Main>
      <SheetBar />
      <TaskbarRow />
    </Window>
  );
}
